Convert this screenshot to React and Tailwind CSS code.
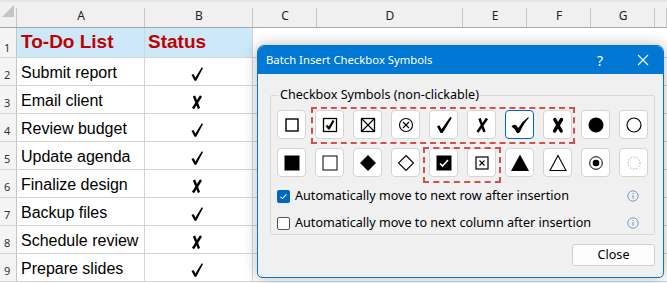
import React from "react";

const COLS = ["", "A", "B", "C", "D", "E", "F", "G", ""];
const WIDTHS = ["w-[17px]", "w-[128px]", "w-[108px]", "w-[64px]", "w-[146px]", "w-[64px]", "w-[64px]", "w-[64px]", "w-[12px]"];

const TASKS = [
    ["Submit report", true],
    ["Email client", false],
    ["Review budget", true],
    ["Update agenda", true],
    ["Finalize design", false],
    ["Backup files", true],
    ["Schedule review", false],
    ["Prepare slides", true],
];

// symbol drawings, 20x20 box
const S = {
    box: <rect x="4" y="4" width="12" height="12" fill="none" stroke="#000" strokeWidth="1.4" />,
    boxCheck: (
        <>
            <rect x="3.5" y="3.5" width="13" height="13" fill="none" stroke="#000" strokeWidth="1.3" />
            <path d="M6.5 10.5 L9 13.5 L13.5 5.5" fill="none" stroke="#000" strokeWidth="2.2" strokeLinejoin="round" />
        </>
    ),
    boxX: (
        <>
            <rect x="3.5" y="3.5" width="13" height="13" fill="none" stroke="#000" strokeWidth="1.3" />
            <path d="M3.5 3.5 L16.5 16.5 M16.5 3.5 L3.5 16.5" stroke="#000" strokeWidth="1.2" />
        </>
    ),
    circX: (
        <>
            <circle cx="10" cy="10" r="6.5" fill="none" stroke="#000" strokeWidth="1.1" />
            <path d="M7 7 L13 13 M13 7 L7 13" stroke="#000" strokeWidth="1.1" />
        </>
    ),
    check: <path d="M3 11.5 L5.3 10.3 L7.6 14.2 L16.3 1.8 L17.8 2.9 L8.6 18 L6.6 18 Z" fill="#000" />,
    ballot: (
        <path d="M7.5 3.5 L12.5 17 M15 3.5 L5.5 17" stroke="#000" strokeWidth="2.5" fill="none" />
    ),
    heavyCheck: (
        <path d="M1.5 11.5 Q3.5 8.5 6.5 10.5 L8.3 13 Q12 6.5 18.3 2 L18.8 3 Q13.5 8.5 10 17 Q8.5 19 6.5 17.5 Q4.5 13 1.5 11.5 Z" fill="#000" />
    ),
    heavyX: (
        <path d="M6.8 4.5 L13.2 16 M13.5 4.5 L6.5 16" stroke="#000" strokeWidth="3.4" strokeLinecap="round" fill="none" />
    ),
    dot: <circle cx="10" cy="10" r="7.5" fill="#000" />,
    ring: <circle cx="10" cy="10" r="7" fill="none" stroke="#000" strokeWidth="1.2" />,
    sq: <rect x="2.5" y="2.5" width="15" height="15" fill="#000" />,
    sqO: <rect x="3" y="3" width="14" height="14" fill="none" stroke="#000" strokeWidth="1" />,
    dia: <path d="M10 2 L18 10 L10 18 L2 10 Z" fill="#000" />,
    diaO: <path d="M10 2.5 L17.5 10 L10 17.5 L2.5 10 Z" fill="none" stroke="#000" strokeWidth="1.1" />,
    blackCheck: (
        <>
            <rect x="2.5" y="2.5" width="15" height="15" fill="#000" />
            <path d="M6 10.5 L8.5 13 L14 7" fill="none" stroke="#fff" strokeWidth="1.6" />
        </>
    ),
    smallX: (
        <>
            <rect x="4" y="4" width="12" height="12" fill="none" stroke="#000" strokeWidth="1.2" />
            <path d="M7.5 7.5 L12.5 12.5 M12.5 7.5 L7.5 12.5" stroke="#000" strokeWidth="1.1" />
        </>
    ),
    tri: <path d="M10 1.5 L19 18 L1 18 Z" fill="#000" />,
    triO: <path d="M10 2.5 L18 17.5 L2 17.5 Z" fill="none" stroke="#000" strokeWidth="1.1" />,
    fish: (
        <>
            <circle cx="10" cy="10" r="6.3" fill="none" stroke="#000" strokeWidth="1" />
            <circle cx="10" cy="10" r="3.3" fill="#000" />
        </>
    ),
    dotted: <circle cx="10" cy="10" r="6" fill="none" stroke="#b89c8c" strokeWidth="1" strokeDasharray="1.4 1.6" />,
};

const ROW1 = ["box", "boxCheck", "boxX", "circX", "check", "ballot", "heavyCheck", "heavyX", "dot", "ring"];
const ROW2 = ["sq", "sqO", "dia", "diaO", "blackCheck", "smallX", "tri", "triO", "fish", "dotted"];

function SymbolButton({ name, selected }) {
    return (
        <div
            className={`w-[29px] h-[29px] rounded-[4px] bg-white flex items-center justify-center border ${
                selected ? "border-[#0067c0]" : "border-[#d4d4d4]"
            }`}
        >
            <svg width="20" height="20" viewBox="0 0 20 20">
                {S[name]}
            </svg>
        </div>
    );
}

function InfoIcon() {
    return (
        <svg width="12" height="12" viewBox="0 0 12 12">
            <circle cx="6" cy="6" r="5.2" fill="none" stroke="#6d93c9" strokeWidth="0.9" />
            <rect x="5.5" y="5" width="1" height="3.6" fill="#6d93c9" />
            <rect x="5.5" y="3" width="1" height="1" fill="#6d93c9" />
        </svg>
    );
}

function Dialog() {
    return (
        <div className="absolute left-[257px] top-[45px] w-[407px] h-[233px] bg-[#f0f0f0] border border-[#0078d4] rounded-t-[7px] rounded-b-[5px] shadow-[0_0_14px_rgba(0,0,0,0.28)] font-['Noto_Sans',sans-serif] text-[12.6px] text-black flex flex-col overflow-hidden">
            {/* Title bar */}
            <div className="h-[28px] bg-[#0078d4] text-white flex items-center pl-[8px] shrink-0">
                <span className="flex-1 text-[11.3px]">Batch Insert Checkbox Symbols</span>
                <span className="w-[20px] text-center text-[14px] mr-[27px]">?</span>
                <svg width="12" height="12" viewBox="0 0 12 12" className="mr-[14px]">
                    <path d="M1 1 L11 11 M11 1 L1 11" stroke="#fff" strokeWidth="1.1" />
                </svg>
            </div>

            {/* Body */}
            <div className="relative flex-1 pl-[12px] pt-[21px]">
                <div className="relative border border-[#d8d8d8] rounded-[2px] h-[140px] w-[385px] px-[6px] pt-[14px]">
                    <span className="absolute -top-[10px] left-[8px] bg-[#f0f0f0] px-[1px] leading-[18px]">
                        Checkbox Symbols (non-clickable)
                    </span>
                    <div className="flex gap-[9px]">
                        {ROW1.map((n, i) => (
                            <SymbolButton key={n} name={n} selected={i === 6} />
                        ))}
                    </div>
                    <div className="flex gap-[9px] mt-[9px]">
                        {ROW2.map((n) => (
                            <SymbolButton key={n} name={n} />
                        ))}
                    </div>

                    <div className="flex items-center mt-[9px] h-[20px]">
                        <span className="w-[13px] h-[13px] rounded-[2px] bg-[#0067c0] flex items-center justify-center">
                            <svg width="9" height="9" viewBox="0 0 9 9">
                                <path d="M1.5 4.8 L3.5 6.6 L7.5 2.4" fill="none" stroke="#fff" strokeWidth="1.1" />
                            </svg>
                        </span>
                        <span className="ml-[5px] flex-1">Automatically move to next row after insertion</span>
                        <span className="mr-[9px] flex">
                            <InfoIcon />
                        </span>
                    </div>
                    <div className="flex items-center mt-[7px] h-[20px]">
                        <span className="w-[13px] h-[13px] rounded-[2px] border border-[#555] bg-white" />
                        <span className="ml-[5px] flex-1">Automatically move to next column after insertion</span>
                        <span className="mr-[9px] flex">
                            <InfoIcon />
                        </span>
                    </div>

                    {/* highlight boxes */}
                    <div className="absolute left-[40px] top-[11px] w-[264px] h-[37px] border-2 border-dashed border-[#d5504c]" />
                    <div className="absolute left-[152px] top-[51px] w-[78px] h-[36px] border-2 border-dashed border-[#d5504c]" />
                </div>

                <div className="flex justify-end mt-[9px] w-[385px]">
                    <button className="w-[83px] h-[22px] bg-[#fdfdfd] border border-[#cfcfcf] rounded-[3px] text-[12.6px] leading-none">
                        Close
                    </button>
                </div>
            </div>
        </div>
    );
}

function Mark({ ok }) {
    return ok ? (
        <svg width="14" height="16" viewBox="0 0 14 16">
            <path d="M1.5 9 L3.6 8 L5.4 11.6 L11.8 1.2 L13 2 L6.3 14.8 L4.6 14.8 Z" fill="#000" />
        </svg>
    ) : (
        <svg width="14" height="16" viewBox="0 0 14 16">
            <path d="M4 2 L9 14.5 M11 2 L3 14.5" stroke="#000" strokeWidth="2.4" fill="none" />
        </svg>
    );
}

export default function App() {
    return (
        <div className="relative w-[667px] h-[283px] overflow-hidden bg-white font-['Liberation_Sans',Arial,sans-serif]">
            {/* Column header */}
            <div className="flex h-[28px] bg-[#f0f0f0] border-t-[2px] border-[#e4e4e4] border-b border-b-[#a8a8a8]">
                {COLS.map((c, i) => (
                    <div
                        key={i}
                        className={`${WIDTHS[i]} shrink-0 relative flex items-center justify-center pt-[2px] text-[12px] text-[#222] font-['Noto_Sans',sans-serif]`}
                    >
                        {i === 0 && (
                            <svg width="12" height="12" viewBox="0 0 12 12" className="absolute left-[2px] top-[3px]">
                                <path d="M12 0 L12 12 L0 12 Z" fill="#c4c4c4" />
                            </svg>
                        )}
                        {c}
                        <span className="absolute right-0 top-[6px] bottom-0 w-px bg-[#c6c6c6]" />
                    </div>
                ))}
            </div>

            {/* Row 1 */}
            <div className="flex h-[30px] border-b border-[#d4d4d4]">
                <div className="w-[17px] shrink-0 bg-[#f4f4f4] border-r border-[#c6c6c6] text-[11px] flex items-end pb-[1px] pl-[4px] text-[#333] font-['Noto_Sans',sans-serif]">1</div>
                <div className="w-[128px] shrink-0 bg-[#cce8f9] border-r border-[#d4d4d4] flex items-center pl-[4px] text-[19px] font-bold text-[#c00000]">
                    To-Do List
                </div>
                <div className="w-[108px] shrink-0 bg-[#cce8f9] border-r border-[#d4d4d4] flex items-center pl-[3px] text-[19px] font-bold text-[#c00000]">
                    Status
                </div>
                <div className="flex-1" />
            </div>

            {TASKS.map(([t, ok], i) => (
                <div key={t} className="flex h-[28px] border-b border-[#d4d4d4]">
                    <div className="w-[17px] shrink-0 bg-[#f4f4f4] border-r border-[#c6c6c6] text-[11px] flex items-end pb-[2px] pl-[4px] text-[#333] font-['Noto_Sans',sans-serif]">
                        {i + 2}
                    </div>
                    <div className="w-[128px] shrink-0 border-r border-[#d4d4d4] flex items-end pb-[3px] pl-[4px] text-[16px] leading-[18px] text-black">
                        {t}
                    </div>
                    <div className="w-[108px] shrink-0 border-r border-[#d4d4d4] flex items-end justify-center pb-[3px] pr-[4px]">
                        <Mark ok={ok} />
                    </div>
                    <div className="flex-1" />
                </div>
            ))}

            <Dialog />
        </div>
    );
}
